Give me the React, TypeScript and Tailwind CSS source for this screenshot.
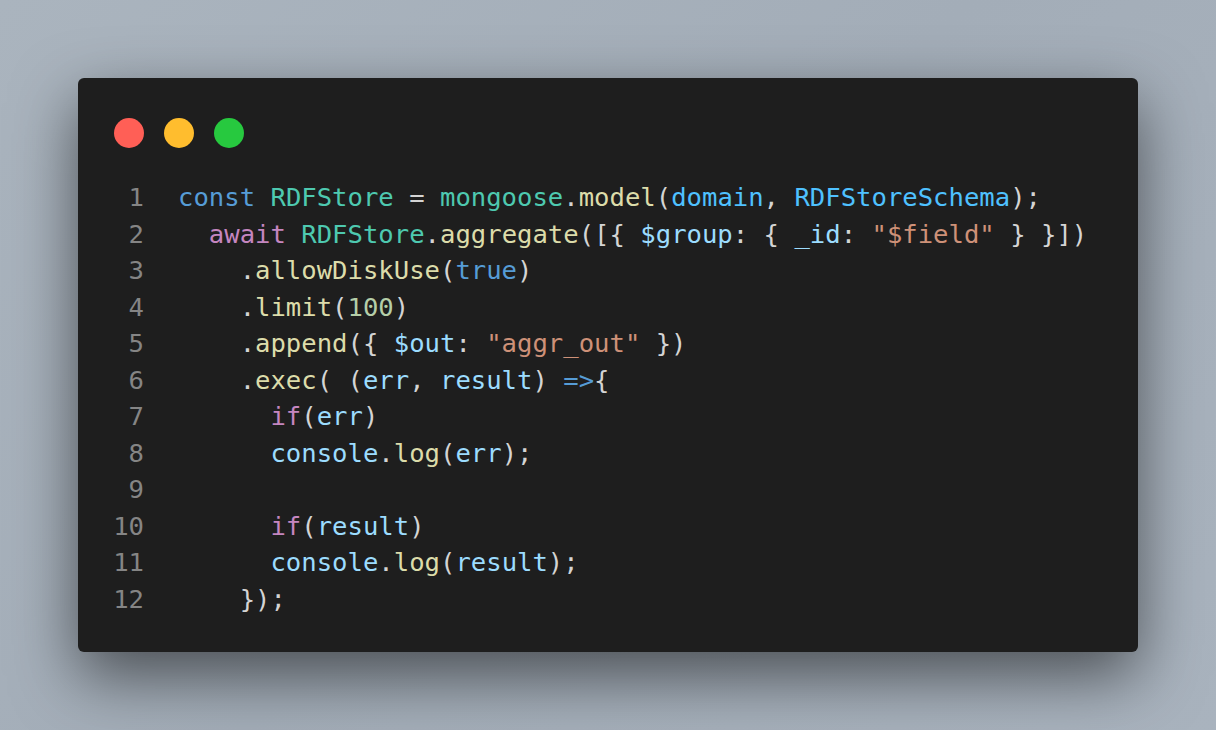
import React from "react";

type Tok = [string, string];

const kw = "text-[#569cd6]";
const cls = "text-[#4ec9b0]";
const fn = "text-[#dcdcaa]";
const vr = "text-[#9cdcfe]";
const cn = "text-[#4fc1ff]";
const str = "text-[#ce9178]";
const num = "text-[#b5cea8]";
const ctl = "text-[#c586c0]";
const p = "text-[#d4d4d4]";

const lines: Tok[][] = [
  [[kw, "const"], [p, " "], [cls, "RDFStore"], [p, " = "], [cls, "mongoose"], [p, "."], [fn, "model"], [p, "("], [cn, "domain"], [p, ", "], [cn, "RDFStoreSchema"], [p, ");"]],
  [[p, "  "], [ctl, "await"], [p, " "], [cls, "RDFStore"], [p, "."], [fn, "aggregate"], [p, "([{ "], [vr, "$group"], [p, ": { "], [vr, "_id"], [p, ": "], [str, "\"$field\""], [p, " } }])"]],
  [[p, "    ."], [fn, "allowDiskUse"], [p, "("], [kw, "true"], [p, ")"]],
  [[p, "    ."], [fn, "limit"], [p, "("], [num, "100"], [p, ")"]],
  [[p, "    ."], [fn, "append"], [p, "({ "], [vr, "$out"], [p, ": "], [str, "\"aggr_out\""], [p, " })"]],
  [[p, "    ."], [fn, "exec"], [p, "( ("], [vr, "err"], [p, ", "], [vr, "result"], [p, ") "], [kw, "=>"], [p, "{"]],
  [[p, "      "], [ctl, "if"], [p, "("], [vr, "err"], [p, ")"]],
  [[p, "      "], [vr, "console"], [p, "."], [fn, "log"], [p, "("], [vr, "err"], [p, ");"]],
  [],
  [[p, "      "], [ctl, "if"], [p, "("], [vr, "result"], [p, ")"]],
  [[p, "      "], [vr, "console"], [p, "."], [fn, "log"], [p, "("], [vr, "result"], [p, ");"]],
  [[p, "    });"]],
];

export default function App() {
  return (
    <div className="h-[730px] w-full overflow-hidden bg-[linear-gradient(135deg,#aab4be_0%,#a3adb8_50%,#a9b3be_100%)] px-[78px] pt-[78px]">
      <div className="h-[574px] rounded-[6px] bg-[#1e1e1e] pl-[34px] pt-[40px] shadow-[0_24px_64px_rgba(0,0,0,0.55)]">
        <div className="flex gap-[20px] pl-[2px]">
          <div className="h-[30px] w-[30px] rounded-full bg-[#ff5f56]" />
          <div className="h-[30px] w-[30px] rounded-full bg-[#ffbd2e]" />
          <div className="h-[30px] w-[30px] rounded-full bg-[#27c93f]" />
        </div>
        <div
          className="mt-[31px] flex gap-[34px] text-[25.6px] leading-[36.5px]"
          style={{ fontFamily: '"DejaVu Sans Mono", "Liberation Mono", monospace' }}
        >
          <div className="w-[32px] text-right text-[#858585]">
            {lines.map((_, i) => (
              <div key={i}>{i + 1}</div>
            ))}
          </div>
          <div className="whitespace-pre">
            {lines.map((line, i) => (
              <div key={i}>
                {line.length === 0 ? " " : line.map(([c, t], j) => (
                  <span key={j} className={c}>{t}</span>
                ))}
              </div>
            ))}
          </div>
        </div>
      </div>
    </div>
  );
}
